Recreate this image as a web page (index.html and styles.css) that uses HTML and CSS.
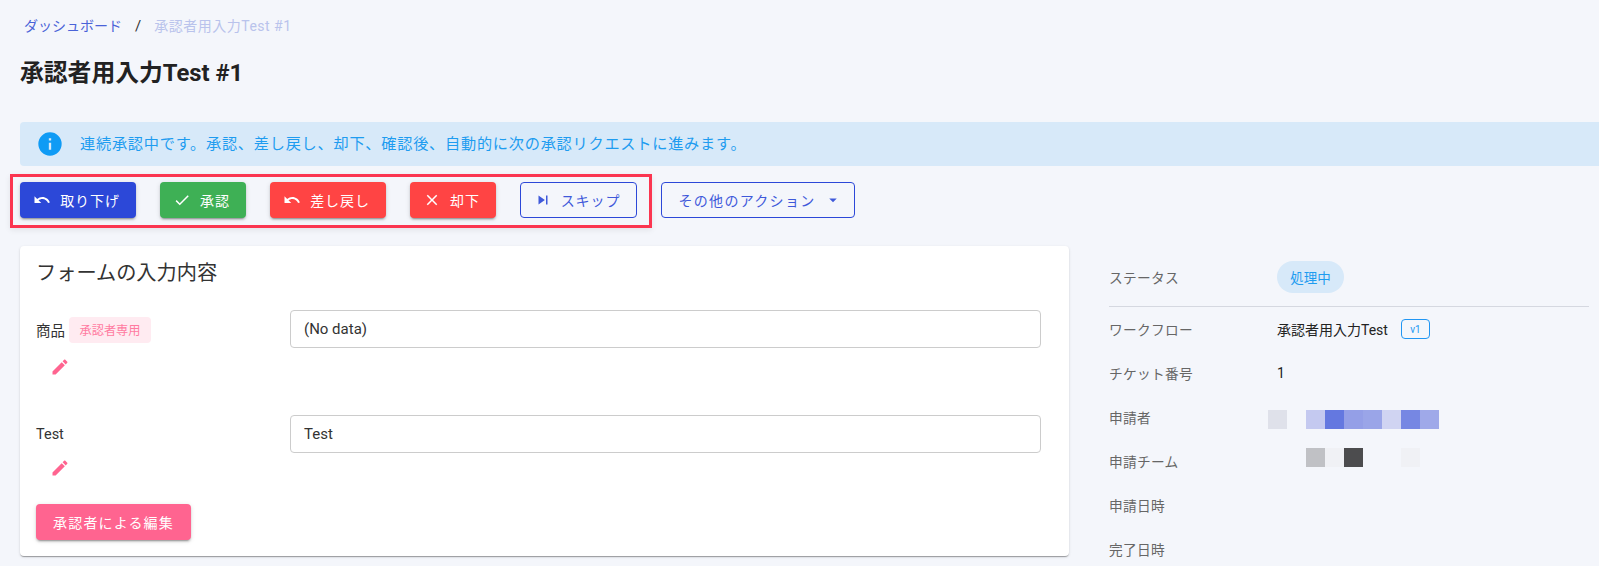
FILE: index.html
```html
<!DOCTYPE html>
<html lang="ja">
<head>
<meta charset="utf-8">
<title>承認者用入力Test #1</title>
<link rel="stylesheet" href="styles.css">
</head>
<body>
<div class="page">
  <nav class="crumbs">
    <a class="crumb-link">ダッシュボード</a>
    <span class="crumb-sep">/</span>
    <span class="crumb-current">承認者用入力Test #1</span>
  </nav>
  <h1 class="title">承認者用入力Test #1</h1>
  <div class="alert">
    <svg class="alert-icon" viewBox="0 0 24 24"><path d="M13,9H11V7H13M13,17H11V11H13M12,2A10,10 0 0,0 2,12A10,10 0 0,0 12,22A10,10 0 0,0 22,12A10,10 0 0,0 12,2Z"/></svg>
    <span>連続承認中です。承認、差し戻し、却下、確認後、自動的に次の承認リクエストに進みます。</span>
  </div>
  <div class="actions">
    <div class="highlight"></div>
    <button class="btn btn-blue w116"><svg class="ico" viewBox="0 0 24 24"><path d="M12.5,8C9.85,8 7.45,9 5.6,10.6L2,7V16H11L7.38,12.38C8.77,11.22 10.54,10.5 12.5,10.5C16.04,10.5 19.05,12.81 20.1,16L22.47,15.22C21.08,11.03 17.15,8 12.5,8Z"/></svg>取り下げ</button>
    <button class="btn btn-green w86"><svg class="ico" viewBox="0 0 24 24"><path d="M21,7L9,19L3.5,13.5L4.91,12.09L9,16.17L19.59,5.59L21,7Z"/></svg>承認</button>
    <button class="btn btn-red w116"><svg class="ico" viewBox="0 0 24 24"><path d="M12.5,8C9.85,8 7.45,9 5.6,10.6L2,7V16H11L7.38,12.38C8.77,11.22 10.54,10.5 12.5,10.5C16.04,10.5 19.05,12.81 20.1,16L22.47,15.22C21.08,11.03 17.15,8 12.5,8Z"/></svg>差し戻し</button>
    <button class="btn btn-red w86"><svg class="ico" viewBox="0 0 24 24"><path d="M19,6.41L17.59,5L12,10.59L6.41,5L5,6.41L10.59,12L5,17.59L6.41,19L12,13.41L17.59,19L19,17.59L13.41,12L19,6.41Z"/></svg>却下</button>
    <button class="btn btn-outline w117"><svg class="ico" viewBox="0 0 24 24"><path d="M16,18H18V6H16M6,18L14.5,12L6,6V18Z"/></svg>スキップ</button>
    <button class="btn btn-outline w194">その他のアクション<svg class="ico ico-right" viewBox="0 0 24 24"><path d="M7,10L12,15L17,10H7Z"/></svg></button>
  </div>
  <div class="columns">
    <section class="card">
      <h2 class="card-title">フォームの入力内容</h2>
      <div class="field">
        <div class="field-label"><span>商品</span><span class="chip-pink">承認者専用</span></div>
        <div class="input">(No data)</div>
      </div>
      <div class="edit"><svg class="pencil" viewBox="0 0 24 24"><path d="M20.71,7.04C21.1,6.65 21.1,6 20.71,5.63L18.37,3.29C18,2.9 17.35,2.9 16.96,3.29L15.12,5.12L18.87,8.87M3,17.25V21H6.75L17.81,9.93L14.06,6.18L3,17.25Z"/></svg></div>
      <div class="field field-second">
        <div class="field-label"><span>Test</span></div>
        <div class="input">Test</div>
      </div>
      <div class="edit edit-second"><svg class="pencil" viewBox="0 0 24 24"><path d="M20.71,7.04C21.1,6.65 21.1,6 20.71,5.63L18.37,3.29C18,2.9 17.35,2.9 16.96,3.29L15.12,5.12L18.87,8.87M3,17.25V21H6.75L17.81,9.93L14.06,6.18L3,17.25Z"/></svg></div>
      <button class="btn btn-pink">承認者による編集</button>
    </section>
    <aside class="side">
      <div class="row status-row">
        <div class="key">ステータス</div>
        <div><span class="chip-status">処理中</span></div>
      </div>
      <div class="row">
        <div class="key">ワークフロー</div>
        <div class="val">承認者用入力Test<span class="ver">v1</span></div>
      </div>
      <div class="row">
        <div class="key">チケット番号</div>
        <div class="val">1</div>
      </div>
      <div class="row">
        <div class="key">申請者</div>
        <div class="mosaic mosaic-user">
          <i class="t c1"></i><i class="t"></i><i class="t c2"></i><i class="t c3"></i><i class="t c4"></i><i class="t c5"></i><i class="t c6"></i><i class="t c7"></i><i class="t c8"></i>
        </div>
      </div>
      <div class="row">
        <div class="key">申請チーム</div>
        <div class="mosaic mosaic-team">
          <i class="t"></i><i class="t"></i><i class="t d1"></i><i class="t d2"></i><i class="t d3"></i><i class="t"></i><i class="t"></i><i class="t d2"></i>
        </div>
      </div>
      <div class="row"><div class="key">申請日時</div></div>
      <div class="row"><div class="key">完了日時</div></div>
    </aside>
  </div>
</div>
</body>
</html>
```

FILE: styles.css
```css
* { box-sizing: border-box; }
html, body { margin: 0; height: 566px; overflow: hidden; }
body {
  background: #f4f6fb;
  color: #2b2b2b;
  font-family: Roboto, "Noto Sans CJK JP", sans-serif;
  font-size: 14px;
}
.page { padding-left: 20px; }
.crumbs {
  display: flex;
  align-items: center;
  height: 20px;
  margin-top: 16px;
  padding-left: 4px;
  font-size: 14px;
  line-height: 20px;
}
.crumb-link { color: #4a63d8; }
.crumb-sep { margin: 0 13px; color: #333; font-size: 15px; }
.crumb-current { color: #b9c3ec; letter-spacing: .5px; }
.title {
  margin: 17px 0 0;
  height: 40px;
  font-size: 23.8px;
  font-weight: 700;
  line-height: 40px;
  color: #222;
}
.alert {
  display: flex;
  align-items: center;
  gap: 16px;
  height: 44px;
  margin-top: 29px;
  padding-left: 16px;
  border-radius: 4px 0 0 4px;
  background: #d7e9f9;
  color: #1e9cf0;
  font-size: 15.2px;
  line-height: 42px;
  letter-spacing: .75px;
}
.alert-icon { width: 28px; height: 28px; fill: #0f9bf5; flex: none; }
.actions {
  position: relative;
  display: flex;
  gap: 24px;
  margin-top: 16px;
  height: 36px;
}
.highlight {
  position: absolute;
  left: -10px;
  top: -8px;
  width: 642px;
  height: 54px;
  border: 3px solid #fb3550;
  box-shadow: 0 2px 6px rgba(0,0,0,.08);
  pointer-events: none;
}
.btn {
  display: inline-flex;
  align-items: center;
  justify-content: center;
  height: 36px;
  padding: 0 3px 0 0;
  border: 0;
  border-radius: 4px;
  font-family: inherit;
  font-size: 14px;
  letter-spacing: .9px;
  color: #fff;
  box-shadow: 0 3px 1px -2px rgba(0,0,0,.2), 0 2px 2px 0 rgba(0,0,0,.14), 0 1px 5px 0 rgba(0,0,0,.12);
}
.w86 { width: 86px; }
.w116 { width: 116px; }
.w117 { width: 117px; }
.w194 { width: 194px; letter-spacing: 1.3px; padding: 0 0 0 4px; }
.btn-blue { background: #2c48d8; }
.btn-green { background: #3eb055; }
.btn-red { background: #ff4444; }
.btn-outline {
  background: transparent;
  border: 1px solid #2c48d8;
  color: #3f59da;
  box-shadow: none;
}
.btn-pink {
  width: 155px;
  padding: 0;
  background: #ff6490;
  letter-spacing: 1.15px;
}
.ico { width: 18px; height: 18px; margin-right: 9px; fill: currentColor; flex: none; }
.ico-right { margin: 0 0 0 8px; }
.columns {
  display: grid;
  grid-template-columns: 1049px 480px;
  gap: 40px;
  margin-top: 28px;
}
.card {
  height: 310px;
  padding: 0 16px;
  border-radius: 4px;
  background: #fff;
  box-shadow: 0 2px 1px -1px rgba(0,0,0,.2), 0 1px 1px 0 rgba(0,0,0,.14), 0 1px 3px 0 rgba(0,0,0,.12);
}
.card-title {
  margin: 0;
  height: 52px;
  padding-top: 10px;
  font-size: 20.2px;
  font-weight: 400;
  line-height: 34px;
  color: #333;
}
.field {
  display: grid;
  grid-template-columns: 254px 751px;
  margin-top: 12px;
}
.field-second { margin-top: 0; }
.field-label {
  display: flex;
  align-items: center;
  gap: 4px;
  height: 38px;
  padding-top: 1px;
  font-size: 14.5px;
  color: #333;
}
.chip-pink {
  display: inline-flex;
  align-items: center;
  justify-content: center;
  width: 82px;
  height: 26px;
  border-radius: 4px;
  background: #ffebf1;
  color: #ff7ba1;
  font-size: 12.2px;
}
.input {
  height: 38px;
  padding: 0 13px;
  border: 1px solid #ccc;
  border-radius: 4px;
  background: #fff;
  font-size: 15px;
  line-height: 37px;
  color: #333;
}
.edit {
  display: flex;
  align-items: center;
  height: 67px;
  padding: 0 0 29px 14px;
}
.edit-second { height: 51px; padding-bottom: 21px; }
.pencil { width: 20px; height: 20px; fill: #ff6490; }
.side { display: block; }
.row {
  display: grid;
  grid-template-columns: 168px 1fr;
  align-items: center;
  height: 44px;
}
.status-row {
  height: 60px;
  margin-top: 1px;
  border-bottom: 1px solid #d5d8e0;
}
.key { color: #666; font-size: 13.7px; letter-spacing: .3px; }
.val { display: flex; align-items: center; color: #222; font-size: 14px; }
.chip-status {
  display: inline-flex;
  align-items: center;
  justify-content: center;
  width: 67px;
  height: 32px;
  border-radius: 16px;
  background: #d7e9f9;
  color: #1e9cf0;
  font-size: 13.5px;
}
.ver {
  display: inline-flex;
  align-items: center;
  justify-content: center;
  width: 29px;
  height: 20px;
  margin-left: 13px;
  border: 1px solid #2196f3;
  border-radius: 4px;
  color: #2196f3;
  font-size: 10px;
}
.mosaic { display: flex; margin-left: -9px; }
.mosaic-user { margin-top: 5px; }
.mosaic-team { margin-top: -7px; }
.t { display: block; width: 19px; height: 19px; }
.c1 { background: #dfe1ea; }
.c2 { background: #c4c9f0; }
.c3 { background: #6478e0; }
.c4 { background: #949fe7; }
.c5 { background: #9aa5e8; }
.c6 { background: #d0d4f2; }
.c7 { background: #7687e3; }
.c8 { background: #9fa9e9; }
.d1 { background: #c0c1c5; }
.d2 { background: #f0f1f5; }
.d3 { background: #4c4c4e; }
```
